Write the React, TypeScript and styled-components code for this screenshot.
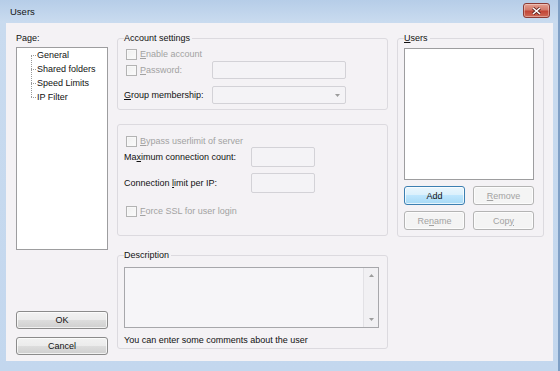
import styled, { createGlobalStyle } from "styled-components";

const GlobalStyle = createGlobalStyle`
  html, body {
    margin: 0;
    padding: 0;
  }
  body {
    font-family: "Liberation Sans", Arial, sans-serif;
    font-size: 9px;
    color: #111;
    background: #c2d7ee;
  }
  * {
    box-sizing: border-box;
  }
`;

const Window = styled.div`
  width: 560px;
  height: 371px;
  display: flex;
  flex-direction: column;
  background: linear-gradient(180deg, #b6cde8 0px, #c9dbef 22px, #c3d7ee 100%);
  border-right: 2px solid #7f9fc5;
`;

const TitleBar = styled.div`
  height: 23px;
  display: flex;
  align-items: center;
  justify-content: space-between;
  padding: 0 8px 0 10px;
`;

const Title = styled.span`
  font-size: 9.5px;
  color: #151515;
  margin-top: -1px;
`;

const CloseButton = styled.div`
  width: 27px;
  height: 15px;
  margin-top: -2px;
  border: 1px solid #8c3b35;
  border-radius: 3px;
  background: linear-gradient(180deg, #e4a091 0%, #d27a6b 45%, #c24536 55%, #cf6a57 100%);
  display: flex;
  align-items: center;
  justify-content: center;
  box-shadow: inset 0 0 0 1px rgba(255, 255, 255, 0.35);
`;

const Client = styled.div`
  flex: 1;
  margin: 0 5px 10px 6px;
  background: #f4f2f5;
  display: flex;
  gap: 9px;
  padding: 9px 9px 6px 10px;
`;

const LeftColumn = styled.div`
  width: 92px;
  display: flex;
  flex-direction: column;
`;

const Label = styled.div<{ $disabled?: boolean }>`
  line-height: 12px;
  white-space: nowrap;
  color: ${(p) => (p.$disabled ? "#a2a2a2" : "#111")};
`;

const Key = styled.span`
  text-decoration: underline;
`;

const Tree = styled.ul`
  list-style: none;
  margin: 3px 0 0;
  padding: 0;
  height: 203px;
  background: #fff;
  border: 1px solid #9d9d9f;
  position: relative;

  &::before {
    content: "";
    position: absolute;
    left: 14px;
    top: 7px;
    height: 42px;
    border-left: 1px dotted #9a9a9a;
  }
`;

const TreeItem = styled.li`
  height: 14px;
  line-height: 14px;
  padding-left: 20px;
  position: relative;

  &::before {
    content: "";
    position: absolute;
    left: 14px;
    top: 7px;
    width: 5px;
    border-top: 1px dotted #9a9a9a;
  }
`;

const BottomButtons = styled.div`
  margin-top: auto;
  display: flex;
  flex-direction: column;
  gap: 8px;
`;

const Button = styled.button<{ $primary?: boolean; $height?: number }>`
  font-family: inherit;
  font-size: 9px;
  height: ${(p) => p.$height ?? 18}px;
  padding: 0;
  border-radius: 3px;
  border: 1px solid ${(p) => (p.$primary ? "#3c7fb1" : "#8b8b8b")};
  color: #111;
  background: ${(p) =>
    p.$primary
      ? "linear-gradient(180deg, #eaf6fd 0%, #d9f0fc 50%, #bee6fd 50%, #a7d9f5 100%)"
      : "linear-gradient(180deg, #f2f2f2 0%, #ebebeb 50%, #dddddd 50%, #cfcfcf 100%)"};
  box-shadow: inset 0 0 0 1px rgba(255, 255, 255, 0.7);

  &:disabled {
    color: #a2a2a2;
    border-color: #b4b4b4;
    background: #f4f4f4;
    box-shadow: inset 0 0 0 1px #fcfcfc;
  }
`;

const MiddleColumn = styled.div`
  width: 271px;
  display: flex;
  flex-direction: column;
`;

const RightColumn = styled.div`
  width: 147px;
  display: flex;
  flex-direction: column;
`;

const Group = styled.fieldset<{ $pad: string; $gap?: number }>`
  margin: ${(p) => p.$gap ?? 0}px 0 0;
  padding: ${(p) => p.$pad};
  min-width: 0;
  border: 1px solid #dcdadf;
  border-radius: 3px;
  display: flex;
  flex-direction: column;
`;

const Legend = styled.legend`
  padding: 0 2px 0 0;
  margin-left: 0;
  line-height: 12px;
  color: #111;
`;

const Row = styled.div<{ $h: number; $mt?: number }>`
  height: ${(p) => p.$h}px;
  margin-top: ${(p) => p.$mt ?? 0}px;
  display: flex;
  align-items: center;
`;

const LabelCell = styled(Label)<{ $w: number }>`
  width: ${(p) => p.$w}px;
  flex-shrink: 0;
`;

const CheckLabel = styled.label`
  display: flex;
  align-items: center;
  gap: 3px;
  margin-left: 2px;
  color: #a2a2a2;
  line-height: 12px;
`;

const CheckBox = styled.span`
  width: 11px;
  height: 11px;
  border: 1px solid #b3b3b3;
  background: linear-gradient(135deg, #efefef, #fbfbfb);
  box-shadow: inset 0 0 0 1px #f8f8f8;
`;

const Input = styled.div<{ $w: number; $h?: number }>`
  width: ${(p) => p.$w}px;
  height: ${(p) => p.$h ?? 18}px;
  border: 1px solid #d3d2d7;
  border-radius: 2px;
  background: #f4f3f6;
  display: flex;
  align-items: center;
  justify-content: flex-end;
  padding-right: 5px;
`;

const DescBox = styled.div`
  height: 61px;
  border: 1px solid #a7a7ab;
  background: #f6f5f8;
  display: flex;
  justify-content: flex-end;
`;

const ScrollBar = styled.div`
  width: 15px;
  border-left: 1px solid #e2e1e5;
  background: #f1f0f3;
  display: flex;
  flex-direction: column;
  justify-content: space-between;
  align-items: center;
  padding: 6px 0 6px;
`;

const Hint = styled(Label)`
  margin-top: 6px;
`;

const ListBox = styled.div`
  height: 132px;
  margin-top: 4px;
  background: #fff;
  border: 1px solid #9d9d9f;
`;

const ButtonGrid = styled.div`
  display: grid;
  grid-template-columns: 61px 61px;
  column-gap: 8px;
  row-gap: 6px;
  margin-top: 6px;
`;

function Arrow({ up }: { up?: boolean }) {
  return (
    <svg width="5" height="3" viewBox="0 0 5 3">
      <path d={up ? "M0 3 L2.5 0 L5 3 Z" : "M0 0 L5 0 L2.5 3 Z"} fill="#9c9c9c" />
    </svg>
  );
}

function Check({ children }: { children: React.ReactNode }) {
  return (
    <CheckLabel>
      <CheckBox />
      <span>{children}</span>
    </CheckLabel>
  );
}

export default function App() {
  return (
    <>
      <GlobalStyle />
      <Window>
        <TitleBar>
          <Title>Users</Title>
          <CloseButton>
            <svg width="9" height="8" viewBox="0 0 9 8">
              <path d="M1 1 L8 7 M8 1 L1 7" stroke="#5a1e1a" strokeWidth="3" />
              <path d="M1 1 L8 7 M8 1 L1 7" stroke="#fff" strokeWidth="1.6" />
            </svg>
          </CloseButton>
        </TitleBar>
        <Client>
          <LeftColumn>
            <Label>Page:</Label>
            <Tree>
              <TreeItem>General</TreeItem>
              <TreeItem>Shared folders</TreeItem>
              <TreeItem>Speed Limits</TreeItem>
              <TreeItem>IP Filter</TreeItem>
            </Tree>
            <BottomButtons>
              <Button>OK</Button>
              <Button>Cancel</Button>
            </BottomButtons>
          </LeftColumn>

          <MiddleColumn>
            <Group $pad="3px 8px 5px 6px">
              <Legend>Account settings</Legend>
              <Row $h={14}>
                <Check>
                  <Key>E</Key>nable account
                </Check>
              </Row>
              <Row $h={18}>
                <LabelCell $w={88}>
                  <Check>
                    <Key>P</Key>assword:
                  </Check>
                </LabelCell>
                <Input $w={134} />
              </Row>
              <Row $h={18} $mt={7}>
                <LabelCell $w={88}>
                  <Key>G</Key>roup membership:
                </LabelCell>
                <Input $w={134}>
                  <Arrow />
                </Input>
              </Row>
            </Group>

            <Group $pad="10px 8px 17px 6px" $gap={14}>
              <Row $h={12}>
                <Check>
                  <Key>B</Key>ypass userlimit of server
                </Check>
              </Row>
              <Row $h={20}>
                <LabelCell $w={127}>
                  Ma<Key>x</Key>imum connection count:
                </LabelCell>
                <Input $w={64} $h={20} />
              </Row>
              <Row $h={20} $mt={6}>
                <LabelCell $w={127}>
                  Connection <Key>l</Key>imit per IP:
                </LabelCell>
                <Input $w={64} $h={20} />
              </Row>
              <Row $h={14} $mt={11}>
                <Check>
                  <Key>F</Key>orce SSL for user login
                </Check>
              </Row>
            </Group>

            <Group $pad="6px 8px 2px 6px" $gap={13}>
              <Legend>Description</Legend>
              <DescBox>
                <ScrollBar>
                  <Arrow up />
                  <Arrow />
                </ScrollBar>
              </DescBox>
              <Hint>You can enter some comments about the user</Hint>
            </Group>
          </MiddleColumn>

          <RightColumn>
            <Group $pad="0 9px 6px 6px">
              <Legend>
                <Key>U</Key>sers
              </Legend>
              <ListBox />
              <ButtonGrid>
                <Button $primary $height={19}>
                  Add
                </Button>
                <Button $height={19} disabled>
                  <Key>R</Key>emove
                </Button>
                <Button $height={19} disabled>
                  Re<Key>n</Key>ame
                </Button>
                <Button $height={19} disabled>
                  Cop<Key>y</Key>
                </Button>
              </ButtonGrid>
            </Group>
          </RightColumn>
        </Client>
      </Window>
    </>
  );
}
